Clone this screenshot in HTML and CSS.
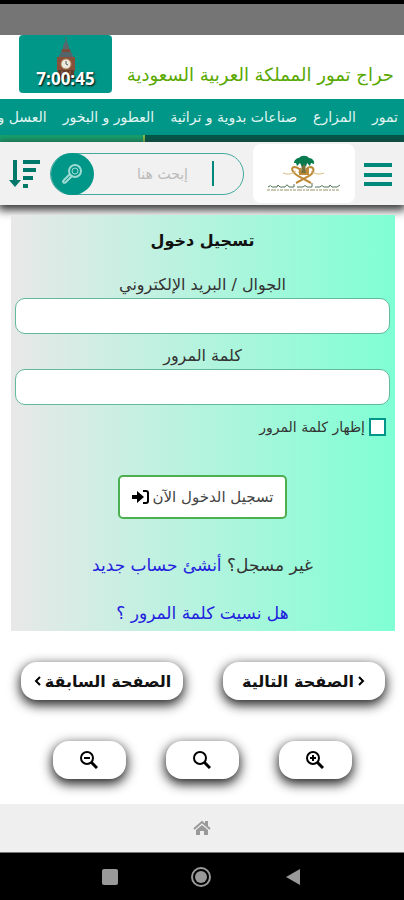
FILE: index.html
```html
<!DOCTYPE html>
<html lang="ar" dir="rtl">
<head>
    <meta charset="UTF-8">
    <meta name="viewport" content="width=device-width, initial-scale=1.0">
    <title>حراج تمور المملكة العربية السعودية</title>
    <link rel="stylesheet" href="styles.css">
</head>
<body>
    <div class="status-bar"></div>

    <header class="top">
        <h1 class="site-name">حراج تمور المملكة العربية السعودية</h1>
        <div class="clock">
            <svg class="tower" viewBox="0 0 20 42" aria-hidden="true">
                <path d="M10 0v7" stroke="#5b6266" stroke-width="1"/>
                <path d="M10 3l3 6v3H7V9z" fill="#56686c"/>
                <path d="M6 12h8l1 4H5z" fill="#7a4c3c"/>
                <path d="M5 15h10l3 6H2z" fill="#52656a"/>
                <path d="M1 20h18v14H1z" fill="#88503a"/>
                <path d="M2 33h16v9H2z" fill="#633c2e"/>
                <path d="M6 34v8M10 34v8M14 34v8" stroke="#a96c48"/>
                <circle cx="10" cy="27" r="5" fill="#ece9df" stroke="#b08a58"/>
                <path d="M10 24v3l2 1" stroke="#555" fill="none"/>
            </svg>
            <time class="time">7:00:45</time>
        </div>
    </header>

    <nav class="menu">
        <a href="#">تمور</a>
        <a href="#">المزارع</a>
        <a href="#">صناعات بدوية و تراثية</a>
        <a href="#">العطور و البخور</a>
        <a href="#">العسل و</a>
    </nav>
    <div class="scroll-line"><div class="scroll-thumb"></div></div>

    <div class="toolbar">
        <button class="icon-btn" type="button" aria-label="القائمة">
            <svg width="28" height="26" viewBox="0 0 28 26"><path d="M0 4h28M0 14h28M0 23h28" stroke="#00897b" stroke-width="4"/></svg>
        </button>
        <a class="logo" href="#" aria-label="الرئيسية">
            <svg width="76" height="40" viewBox="0 0 76 40">
                <g fill="none" stroke="#bd8a38" stroke-width="2">
                    <path d="M30 29l13-7c5-3 6-8 2-9-4 0-6 3-4 6"/>
                    <path d="M45 29l-13-7c-5-3-8-8-4-9 4 0 8 3 5 6"/>
                    <path d="M34 14v6h8v-6"/>
                </g>
                <path d="M17 19c5 2 9 1 13-2M58 19c-5 2-9 1-13-2" stroke="#d6b980" fill="none"/>
                <path d="M36 8h3l1 11h-5z" fill="#78713b"/>
                <path d="M28 9c0-3 3-5 5-5 2-3 8-3 10 0 3 0 6 3 5 6l-3-1-1 3-3-3-1 4-2-3-2 3-2-4-3 3-1-3z" fill="#087a50"/>
                <path d="M2 33q3-3 4 0h5l1-2 2 2h5q2-4 4 0h5v-3m3 3h6q2-3 4 0h5v-4m3 4h5q2-3 4 0h5l1-2 2 2h5l3-2" stroke="#52745b" fill="none"/>
                <path d="M1 36h72" stroke="#9a9468" stroke-dasharray="3 1 5 1 2 1"/>
            </svg>
        </a>
        <form class="search">
            <input class="search-input" type="search" placeholder="إبحث هنا" aria-label="إبحث هنا">
            <span class="search-bar"></span>
            <button class="search-btn" type="button" aria-label="بحث">
                <svg width="22" height="22" viewBox="0 0 22 22" fill="none" stroke="#9edbd2">
                    <circle cx="13" cy="8" r="6" stroke-width="2"/>
                    <circle cx="13" cy="8" r="3"/>
                    <path d="M8 11l-6 6c-2 2 0 4 2 2l6-6" stroke-width="2"/>
                </svg>
            </button>
        </form>
        <button class="icon-btn" type="button" aria-label="ترتيب">
            <svg width="32" height="28" viewBox="0 0 32 28">
                <path d="M6 0v21" stroke="#00796b" stroke-width="4"/>
                <path d="M0 20h12l-6 7z" fill="#00796b"/>
                <path d="M14 2h17M14 10h13M14 18h10M14 26h5" stroke="#00796b" stroke-width="4"/>
            </svg>
        </button>
    </div>

    <main>
        <form class="login">
            <h2 class="login-title">تسجيل دخول</h2>
            <label class="field-label" for="user">الجوال / البريد الإلكتروني</label>
            <input class="field" id="user" type="text">
            <label class="field-label" for="password">كلمة المرور</label>
            <input class="field" id="password" type="password">
            <div class="show">
                <input class="show-check" id="show" type="checkbox">
                <label for="show">إظهار كلمة المرور</label>
            </div>
            <button class="submit" type="button">
                <span>تسجيل الدخول الآن</span>
                <svg width="17" height="14" viewBox="0 0 17 14">
                    <path d="M0 5h5V1l7 6-7 6V9H0z"/>
                    <path d="M11 1h3q2 0 2 2v8q0 2-2 2h-3" fill="none" stroke="#000" stroke-width="2"/>
                </svg>
            </button>
            <p class="link-row">غير مسجل؟ <a href="#">أنشئ حساب جديد</a></p>
            <p class="link-row"><a href="#">هل نسيت كلمة المرور ؟</a></p>
        </form>

        <div class="pager">
            <button class="pill" type="button">
                <svg width="8" height="12" viewBox="0 0 8 12"><path d="M1 2l4 4-4 4" fill="none" stroke="#000" stroke-width="2"/></svg>
                <span>الصفحة التالية</span>
            </button>
            <button class="pill" type="button">
                <span>الصفحة السابقة</span>
                <svg width="8" height="12" viewBox="0 0 8 12"><path d="M7 2L3 6l4 4" fill="none" stroke="#000" stroke-width="2"/></svg>
            </button>
        </div>

        <div class="zoomer">
            <button class="pill" type="button" aria-label="تكبير">
                <svg width="18" height="18" viewBox="0 0 18 18" fill="none" stroke="#000" stroke-width="2">
                    <circle cx="7" cy="7" r="6"/><path d="M11 11l6 6" stroke-width="3"/><path d="M7 4v6M4 7h6"/>
                </svg>
            </button>
            <button class="pill" type="button" aria-label="الحجم الأصلي">
                <svg width="18" height="18" viewBox="0 0 18 18" fill="none" stroke="#000" stroke-width="2">
                    <circle cx="7" cy="7" r="6"/><path d="M11 11l6 6" stroke-width="3"/>
                </svg>
            </button>
            <button class="pill" type="button" aria-label="تصغير">
                <svg width="18" height="18" viewBox="0 0 18 18" fill="none" stroke="#000" stroke-width="2">
                    <circle cx="7" cy="7" r="6"/><path d="M11 11l6 6" stroke-width="3"/><path d="M4 7h6"/>
                </svg>
            </button>
        </div>
    </main>

    <footer class="bottom">
        <a href="#" aria-label="الرئيسية">
            <svg width="18" height="16" viewBox="0 0 18 16">
                <path d="M1 9l8-7 8 7" fill="none" stroke="#999" stroke-width="2"/>
                <path d="M12 1h3v6l-3-3z" fill="#999"/>
                <path d="M3 10l6-5 6 5v5h-4v-4H7v4H3z" fill="#999"/>
            </svg>
        </a>
    </footer>
    <div class="system-nav">
        <button class="sys-btn" type="button" aria-label="رجوع">
            <svg width="18" height="18" viewBox="0 0 18 18"><path d="M2 9L16 1v16z" fill="#999"/></svg>
        </button>
        <button class="sys-btn" type="button" aria-label="الشاشة الرئيسية">
            <svg width="22" height="22" viewBox="0 0 22 22"><circle cx="11" cy="11" r="9" fill="none" stroke="#999" stroke-width="2"/><circle cx="11" cy="11" r="6" fill="#999"/></svg>
        </button>
        <button class="sys-btn" type="button" aria-label="التطبيقات">
            <svg width="16" height="16" viewBox="0 0 16 16"><rect width="16" height="16" rx="2" fill="#999"/></svg>
        </button>
    </div>
</body>
</html>
```
FILE: styles.css
```css
* {
    box-sizing: border-box;
}
body {
    margin: 0;
    min-height: 100vh;
    display: flex;
    flex-direction: column;
    font-family: "DejaVu Sans", sans-serif;
    font-size: 16px;
    color: #333;
    background: #fff;
    overflow-x: hidden;
}
button, input {
    font: inherit;
}
button {
    padding: 0;
    border: none;
    background: none;
    cursor: pointer;
}
svg {
    display: block;
}
a {
    text-decoration: none;
}

.status-bar {
    height: 35px;
    border-top: 4px solid #000;
    background: #757575;
}

/* header */
.top {
    display: flex;
    justify-content: space-between;
    height: 64px;
    padding: 0 10px 0 19px;
}
.site-name {
    margin: 0;
    padding-top: 28px;
    font-size: 18px;
    line-height: 24px;
    font-weight: normal;
    white-space: nowrap;
    color: #58a800;
}
.clock {
    display: flex;
    flex-direction: column;
    align-items: center;
    width: 93px;
    height: 58px;
    border-radius: 4px;
    background: #009688;
}
.tower {
    width: 20px;
    height: 42px;
    margin-top: 2px;
}
.time {
    margin-top: -10px;
    font-family: "Open Sans", sans-serif;
    font-size: 17px;
    line-height: 20px;
    font-weight: bold;
    color: #fff;
    text-shadow: 1px 1px 2px #000;
}

.menu {
    display: flex;
    gap: 16px;
    height: 36px;
    padding: 0 6px;
    overflow: hidden;
    background: #009688;
}
.menu a {
    flex: none;
    font-size: 14px;
    line-height: 36px;
    color: #e0f5f2;
}
.scroll-line {
    height: 7px;
    background: #00594b;
    direction: ltr;
}
.scroll-thumb {
    width: 36%;
    height: 7px;
    border-right: 2px solid #8bc34a;
    background: #14a46f;
}

/* toolbar */
.toolbar {
    display: flex;
    align-items: center;
    justify-content: space-between;
    height: 63px;
    padding: 0 12px 0 9px;
    background: #f1f1f1;
    box-shadow: 0 3px 9px 2px #333;
}
.logo {
    display: flex;
    align-items: center;
    justify-content: center;
    width: 102px;
    height: 59px;
    border-radius: 8px;
    background: #fff;
}
.search {
    display: flex;
    align-items: center;
    width: 194px;
    height: 42px;
    border: 1px solid #45a99e;
    border-radius: 21px;
    padding-right: 29px;
    flex-direction: row-reverse;
    justify-content: space-between;
}
.search-bar {
    order: 1;
    width: 2px;
    height: 25px;
    background: #00897b;
}
.search-input {
    flex: 1;
    min-width: 0;
    border: none;
    outline: none;
    padding: 0 24px;
    font-size: 14px;
    background: none;
}
.search-input::placeholder {
    color: #bbb;
}
.search-btn {
    order: -1;
    display: flex;
    align-items: center;
    justify-content: center;
    flex: none;
    width: 43px;
    height: 42px;
    border-radius: 50%;
    background: #009688;
}

/* login */
main {
    flex: 1;
}
.login {
    display: flex;
    flex-direction: column;
    align-items: center;
    margin: 10px 9px 0 11px;
    padding: 12px 5px 0 4px;
    background: linear-gradient(to left, #7fffd4, #e8e8e8);
}
.login-title {
    margin: 0 0 16px;
    font-size: 16px;
    line-height: 28px;
    color: #111;
}
.field-label {
    height: 27px;
    font-size: 16px;
    line-height: 27px;
}
.field {
    width: 100%;
    height: 36px;
    margin-bottom: 8px;
    padding: 0 12px;
    border: 1px solid #63b8a0;
    border-radius: 10px;
    background: #fff;
}
.show {
    display: flex;
    align-items: center;
    align-self: flex-start;
    gap: 4px;
    height: 28px;
    padding: 0 4px;
    font-size: 14px;
}
.show-check {
    appearance: none;
    width: 17px;
    height: 18px;
    margin: 0;
    border: 2px solid #009688;
    background: #fff;
}
.show-check:checked {
    background: #009688;
}
.submit {
    display: flex;
    align-items: center;
    justify-content: center;
    gap: 4px;
    width: 169px;
    height: 44px;
    margin: 34px 0 16px;
    border: 2px solid #4caf50;
    border-radius: 5px;
    font-size: 15px;
    white-space: nowrap;
    color: #444;
    background: #fff;
}
.link-row {
    margin: 12px 0 0;
    font-size: 17px;
    line-height: 36px;
}
.link-row a {
    color: #2222dd;
}

.pager {
    display: flex;
    justify-content: space-between;
    padding: 31px 19px 0 21px;
}
.pill {
    display: flex;
    align-items: center;
    justify-content: center;
    gap: 4px;
    height: 38px;
    border-radius: 16px;
    background: #fff;
    box-shadow: 0 4px 12px 1px #222;
}
.pager .pill {
    width: 162px;
    font-size: 16px;
    font-weight: bold;
    white-space: nowrap;
    color: #111;
}
.zoomer {
    display: flex;
    justify-content: center;
    gap: 40px;
    padding: 41px 0 25px;
}
.zoomer .pill {
    width: 73px;
}

.bottom {
    display: flex;
    align-items: center;
    justify-content: center;
    height: 48px;
    background: #efefef;
}
.system-nav {
    display: flex;
    align-items: center;
    justify-content: center;
    gap: 72px;
    height: 48px;
    border-top: 1px solid #777;
    background: #000;
}
```
